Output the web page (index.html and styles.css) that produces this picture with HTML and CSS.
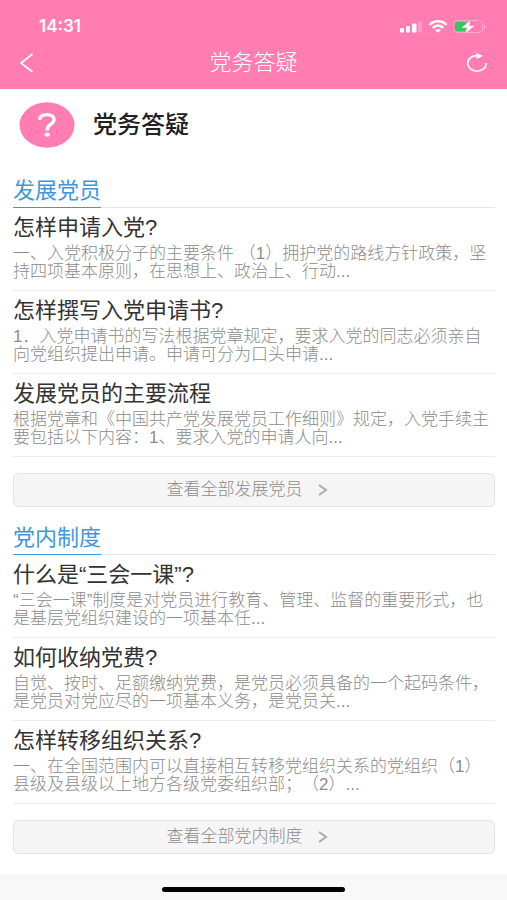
FILE: index.html
```html
<!DOCTYPE html>
<html lang="zh-CN">
<head>
<meta charset="utf-8">
<meta name="viewport" content="width=device-width, initial-scale=1">
<title>党务答疑</title>
<link rel="stylesheet" href="styles.css">
</head>
<body>
<header class="top">
  <div class="status">
    <span class="time">14:31</span>
    <svg class="status-icons" width="88" height="16" viewBox="0 0 88 16" fill="#fff" aria-hidden="true">
      <rect x="1" y="10" width="4" height="4.500" rx="1"/>
      <rect x="7" y="8" width="4" height="6.500" rx="1"/>
      <rect x="13" y="5.500" width="4.500" height="9" rx="1"/>
      <rect x="19" y="3" width="4" height="11.500" rx="1" opacity=".25"/>
      <g fill="none" stroke="#fff" stroke-width="2.400">
        <path d="M30.500 7C35 2 43 2 47.500 7"/>
        <path d="M33.800 10C37 7 41 7 44.200 10"/>
      </g>
      <path d="M36 12Q39 10 42 12L39 14.800Z"/>
      <rect x="54.600" y="2.600" width="29" height="12" rx="3.500" fill="none" stroke="#fff" stroke-opacity=".35"/>
      <path d="M85 6.500Q87.500 8.600 85 10.700Z" opacity=".5"/>
      <rect x="56" y="4" width="11" height="9" rx="2" fill="#34c759"/>
      <path d="M71.500 2.500L62.500 9.700H68L66.500 15.200L75.500 7.700H70Z"/>
    </svg>
  </div>
  <nav class="navbar">
    <button class="icon-button" type="button" aria-label="返回">
      <svg width="16" height="20" viewBox="0 0 16 20" fill="none" stroke="#fff" stroke-width="1.600"><path d="M13.500 1L2 10L13.500 19"/></svg>
    </button>
    <h1 class="nav-title">党务答疑</h1>
    <button class="icon-button icon-button-end" type="button" aria-label="刷新">
      <svg width="22" height="20" viewBox="0 0 22 20"><path d="M12 2.800C6.500 2 1.800 5.500 1.800 10.200C1.800 14.800 6 18.200 11 18.200C16 18.200 20.200 15 20.400 10" fill="none" stroke="#fff" stroke-width="1.600"/><path d="M10.500 0L17 3L10.500 6Z" fill="#fff"/></svg>
    </button>
  </nav>
</header>
<main class="content">
  <div class="hero">
    <svg width="56" height="46" viewBox="0 0 56 46" aria-hidden="true">
      <ellipse cx="28" cy="23" rx="27.500" ry="22.800" fill="#ff7db0"/>
      <path d="M20.800 17.800C20.800 14.500 23.500 12.600 27.800 12.600C32.200 12.600 35 14.600 35 17.600C35 20 33.500 21.300 31.500 22.500C29 24 28.200 25 28.200 28.400" fill="none" stroke="#fff" stroke-width="3.400"/>
      <ellipse cx="28.200" cy="32.600" rx="2.700" ry="2.200" fill="#fff"/>
    </svg>
    <h2 class="hero-title">党务答疑</h2>
  </div>
  <section class="group">
    <div class="group-head"><h3 class="group-title">发展党员</h3></div>
    <article class="item">
      <h4 class="item-title">怎样申请入党?</h4>
      <p class="item-text">一、入党积极分子的主要条件 （1）拥护党的路线方针政策，坚<br>持四项基本原则，在思想上、政治上、行动...</p>
    </article>
    <article class="item">
      <h4 class="item-title">怎样撰写入党申请书?</h4>
      <p class="item-text">1．入党申请书的写法根据党章规定，要求入党的同志必须亲自<br>向党组织提出申请。申请可分为口头申请...</p>
    </article>
    <article class="item">
      <h4 class="item-title">发展党员的主要流程</h4>
      <p class="item-text">根据党章和《中国共产党发展党员工作细则》规定，入党手续主<br>要包括以下内容：1、要求入党的申请人向...</p>
    </article>
    <button class="more" type="button">查看全部发展党员
      <svg width="10" height="12" viewBox="0 0 10 12" fill="none" stroke="#aaa" stroke-width="2"><path d="M1 1L8 6L1 11"/></svg>
    </button>
  </section>
  <section class="group">
    <div class="group-head"><h3 class="group-title">党内制度</h3></div>
    <article class="item">
      <h4 class="item-title">什么是“三会一课”?</h4>
      <p class="item-text">“三会一课”制度是对党员进行教育、管理、监督的重要形式，也<br>是基层党组织建设的一项基本任...</p>
    </article>
    <article class="item">
      <h4 class="item-title">如何收纳党费?</h4>
      <p class="item-text">自觉、按时、足额缴纳党费，是党员必须具备的一个起码条件，<br>是党员对党应尽的一项基本义务，是党员关...</p>
    </article>
    <article class="item">
      <h4 class="item-title">怎样转移组织关系?</h4>
      <p class="item-text">一、在全国范围内可以直接相互转移党组织关系的党组织（1）<br>县级及县级以上地方各级党委组织部；（2）...</p>
    </article>
    <button class="more" type="button">查看全部党内制度
      <svg width="10" height="12" viewBox="0 0 10 12" fill="none" stroke="#aaa" stroke-width="2"><path d="M1 1L8 6L1 11"/></svg>
    </button>
  </section>
</main>
<footer class="home"><div class="home-bar"></div></footer>
</body>
</html>
```
FILE: styles.css
```css
* {
  box-sizing: border-box;
}

body {
  margin: 0;
  min-height: 100vh;
  display: flex;
  flex-direction: column;
  background: #fff;
  color: #333;
  font-family: "Liberation Sans", "Noto Sans CJK SC", sans-serif;
  text-spacing-trim: space-all;
}

h1, h2, h3, h4, p {
  margin: 0;
  font-weight: 400;
}

button {
  font: inherit;
  cursor: pointer;
}

.top {
  background: #ff7db0;
  color: #fff;
}

.status {
  height: 36px;
  padding: 16px 20px 0 39px;
  display: flex;
  justify-content: space-between;
  align-items: center;
}

.time {
  font: 600 17px/20px Inter, sans-serif;
}

.navbar {
  height: 53px;
  padding: 0 19px;
  display: flex;
  justify-content: space-between;
  align-items: center;
}

.icon-button {
  width: 24px;
  height: 24px;
  padding: 0;
  border: 0;
  background: none;
  display: flex;
  justify-content: flex-start;
  align-items: center;
}

.icon-button-end {
  justify-content: flex-end;
}

.nav-title {
  font-size: 22px;
  line-height: 26px;
  font-weight: 300;
}

.content {
  flex: 1;
  padding: 0 12px 20px 13px;
}

.hero {
  height: 71px;
  padding: 0 6px;
  display: flex;
  align-items: center;
  gap: 18px;
}

.hero-title {
  font-size: 24px;
  line-height: 30px;
  font-weight: 500;
  color: #222;
}

.group {
  padding-top: 14px;
}

.group-head {
  height: 34px;
  display: flex;
  border-bottom: 1px solid #e6e6e6;
}

.group-title {
  height: 34px;
  font-size: 22px;
  line-height: 34px;
  color: #3e97dc;
  border-bottom: 1px solid #3e97dc;
}

.item {
  padding: 7px 0 9px;
  border-bottom: 1px solid #eee;
}

.item-title {
  margin-bottom: 4px;
  font-size: 22px;
  line-height: 26px;
}

.item-text {
  font-size: 17px;
  line-height: 18px;
  font-weight: 300;
  color: #8c8c8c;
  white-space: nowrap;
}

.more {
  width: 100%;
  height: 34px;
  margin-top: 16px;
  padding: 0 14px 0 0;
  display: flex;
  justify-content: center;
  align-items: center;
  gap: 15px;
  border: 1px solid #e4e4e4;
  border-radius: 5px;
  background: #f5f5f5;
  color: #8c8c8c;
  font-size: 17px;
  line-height: 20px;
  font-weight: 300;
}

.home {
  height: 26px;
  display: flex;
  justify-content: center;
  align-items: center;
  padding-top: 4px;
  background: #f8f8f8;
}

.home-bar {
  width: 36%;
  height: 5px;
  border-radius: 3px;
  background: #000;
}
```
